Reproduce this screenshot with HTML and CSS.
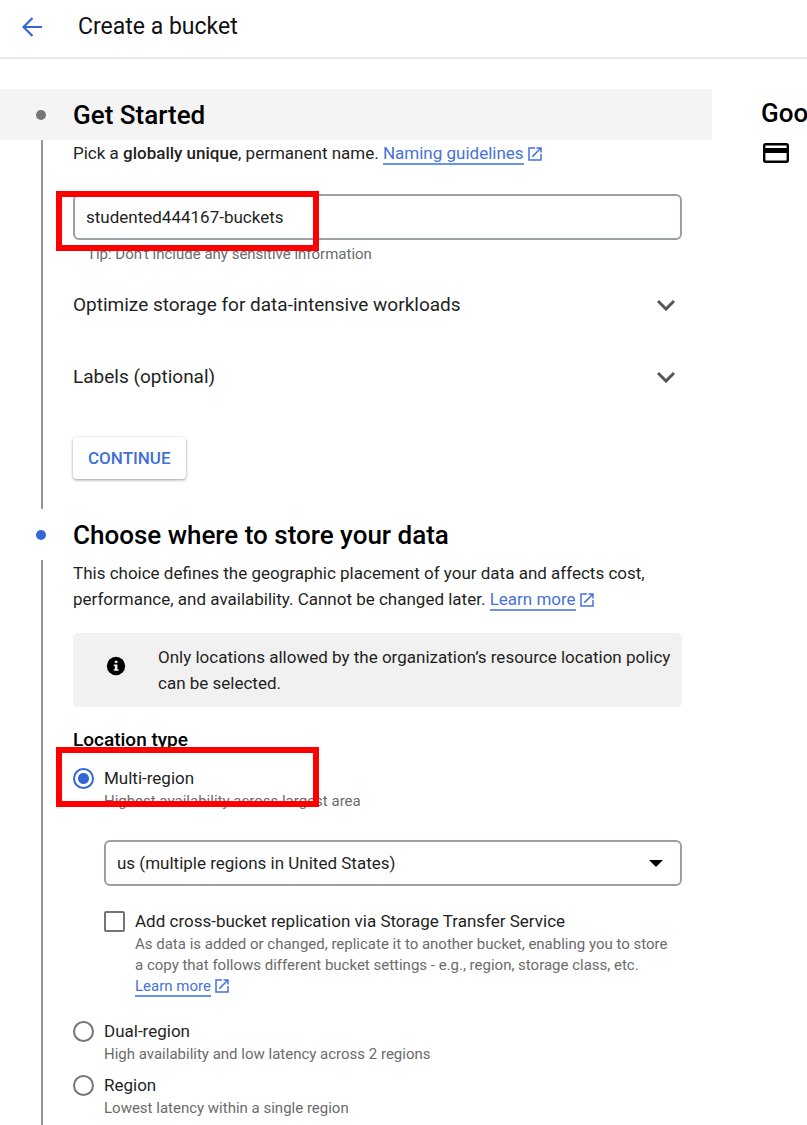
FILE: index.html
```html
<!DOCTYPE html>
<html lang="en">

<head>
    <meta charset="UTF-8">
    <meta name="viewport" content="width=device-width, initial-scale=1.0">
    <title>Create a bucket</title>
    <link rel="stylesheet" href="styles.css">
</head>

<body>

    <!-- shared icons -->
    <svg class="sprite" aria-hidden="true">
        <symbol id="icon-open" viewBox="0 0 24 24">
            <path d="M19 19H5V5h7V3H3v18h18v-9h-2zM14 3v2h3.600l-9.800 9.800 1.400 1.400L19 6.400V10h2V3z"/>
        </symbol>
        <symbol id="icon-chevron" viewBox="0 0 18 12">
            <path d="M1 2l8 8 8-8" fill="none" stroke="currentColor" stroke-width="3"/>
        </symbol>
    </svg>

    <header class="topbar">
        <a class="back" href="#" aria-label="Back">
            <svg width="20" height="20" viewBox="0 0 20 20" aria-hidden="true">
                <path d="M20 10H2M10.500 1L1.500 10l9 9" fill="none" stroke="currentColor" stroke-width="2.200"/>
            </svg>
        </a>
        <h1 class="page-title">Create a bucket</h1>
    </header>

    <div class="layout">

        <main class="stepper">

            <section class="step">
                <header class="step-header visited">
                    <span class="dot"></span>
                    <h2 class="heading">Get Started</h2>
                </header>
                <div class="step-body">
                    <p class="text"><label for="name">Pick a <strong>globally unique</strong>, permanent name.</label> <a class="link" href="#">Naming guidelines</a><svg class="open-icon" aria-hidden="true"><use href="#icon-open"/></svg></p>

                    <div class="name-field">
                        <input class="field" id="name" type="text" value="studented444167-buckets">
                        <span class="highlight"></span>
                    </div>
                    <p class="hint tip">Tip: Don't include any sensitive information</p>

                    <button class="expander" type="button">
                        Optimize storage for data-intensive workloads
                        <svg class="chevron" aria-hidden="true"><use href="#icon-chevron"/></svg>
                    </button>
                    <button class="expander" type="button">
                        Labels (optional)
                        <svg class="chevron" aria-hidden="true"><use href="#icon-chevron"/></svg>
                    </button>

                    <button class="continue" type="button">CONTINUE</button>
                </div>
            </section>

            <section class="step">
                <header class="step-header active">
                    <span class="dot"></span>
                    <h2 class="heading">Choose where to store your data</h2>
                </header>
                <div class="step-body">
                    <p class="text">This choice defines the geographic placement of your data and affects cost, performance, and availability. Cannot be changed later. <a class="link" href="#">Learn more</a><svg class="open-icon" aria-hidden="true"><use href="#icon-open"/></svg></p>

                    <div class="notice">
                        <svg class="info-icon" viewBox="0 0 20 20" aria-hidden="true">
                            <circle cx="10" cy="10" r="9.200"/>
                            <path d="M8.800 4.800h2.600v2.200H8.800zM7.800 8.400h3.600v4.800h1.200v1.500H7.800v-1.500h1V9.900h-1z" fill="#f1f1f1"/>
                        </svg>
                        <p class="text">Only locations allowed by the organization’s resource location policy can be selected.</p>
                    </div>

                    <fieldset class="location">
                        <legend class="legend">Location type</legend>

                        <div class="option first">
                            <input class="radio" type="radio" name="location" id="multi" checked>
                            <div>
                                <label class="option-label" for="multi">Multi-region</label>
                                <p class="hint">Highest availability across largest area</p>
                            </div>
                            <span class="highlight"></span>
                        </div>

                        <div class="nested">
                            <div class="select-wrap">
                                <select class="field" aria-label="Location">
                                    <option>us (multiple regions in United States)</option>
                                </select>
                                <svg class="caret" viewBox="0 0 14 7" aria-hidden="true"><path d="M0 0h14L7 7z"/></svg>
                            </div>
                            <div class="option replication">
                                <input class="checkbox" type="checkbox" id="replication">
                                <div>
                                    <label class="option-label" for="replication">Add cross-bucket replication via Storage Transfer Service</label>
                                    <p class="hint">As data is added or changed, replicate it to another bucket, enabling you to store a copy that follows different bucket settings - e.g., region, storage class, etc. <br><a class="link" href="#">Learn more</a><svg class="open-icon" aria-hidden="true"><use href="#icon-open"/></svg></p>
                                </div>
                            </div>
                        </div>

                        <div class="option">
                            <input class="radio" type="radio" name="location" id="dual">
                            <div>
                                <label class="option-label" for="dual">Dual-region</label>
                                <p class="hint">High availability and low latency across 2 regions</p>
                            </div>
                        </div>

                        <div class="option">
                            <input class="radio" type="radio" name="location" id="region">
                            <div>
                                <label class="option-label" for="region">Region</label>
                                <p class="hint">Lowest latency within a single region</p>
                            </div>
                        </div>
                    </fieldset>
                </div>
            </section>

        </main>

        <aside class="sidebar">
            <h2 class="heading">Goo</h2>
            <svg class="card-icon" viewBox="0 0 26 20" aria-hidden="true">
                <rect x="1.200" y="1.200" width="23.600" height="17.600" rx="1.500" fill="none" stroke="#000" stroke-width="2.400"/>
                <path d="M1 5h24v5H1z"/>
            </svg>
        </aside>

    </div>

</body>

</html>
```
FILE: styles.css
```css
* {
    margin: 0;
    padding: 0;
    box-sizing: border-box;
}

body {
    font-family: Roboto, "Liberation Sans", sans-serif;
    font-size: 17px;
    line-height: 26px;
    color: #1f1f1f;
    background-color: #fff;
}

button,
input,
select {
    font: inherit;
    color: inherit;
}

.sprite {
    display: none;
}

/* top bar */

.topbar {
    display: flex;
    align-items: center;
    gap: 36px;
    height: 59px;
    padding: 0 22px 4px;
    border-bottom: 2px solid #e8e8e8;
}

.back {
    display: flex;
    color: #3367d6;
}

.page-title {
    font-size: 23px;
    font-weight: 400;
    color: #111;
}

/* page columns */

.layout {
    display: grid;
    grid-template-columns: minmax(0, 1fr) 46px;
    gap: 49px;
    padding-top: 30px;
}

.heading {
    font-size: 26px;
    font-weight: 500;
    color: #000;
}

.sidebar {
    padding-top: 11px;
    overflow: hidden;
}

.card-icon {
    display: block;
    width: 26px;
    height: 20px;
    margin: 17px 0 0 2px;
}

/* stepper */

.step-header {
    display: flex;
    align-items: center;
    gap: 27px;
    height: 51px;
    padding-left: 36px;
}

.visited {
    background-color: #f4f4f4;
}

.dot {
    width: 10px;
    height: 10px;
    border-radius: 50%;
    background-color: #757575;
}

.active .dot {
    background-color: #3367d6;
}

.step-body {
    margin-left: 41px;
    padding: 0 30px;
    border-left: 2px solid #949494;
}

.step:first-child .step-body {
    padding-bottom: 30px;
}

.step:last-child .step-body {
    padding-bottom: 7px;
}

.link {
    color: #4672db;
    text-decoration: none;
    border-bottom: 2px solid #6c92ea;
}

.open-icon {
    width: 18px;
    height: 18px;
    margin-left: 2px;
    vertical-align: -4px;
    fill: #4672db;
}

.hint {
    padding-top: 1px;
    font-size: 15px;
    line-height: 21px;
    color: #6b6b6b;
}

.tip {
    padding: 4px 14px;
}

.text strong {
    font-weight: 500;
}

.name-field {
    position: relative;
    margin-top: 28px;
}

.field {
    display: block;
    width: 100%;
    height: 46px;
    padding: 0 11px;
    border: 2px solid #9aa0a6;
    border-radius: 6px;
    background-color: #fff;
    appearance: none;
}

.expander {
    display: flex;
    justify-content: space-between;
    align-items: center;
    width: 100%;
    height: 72px;
    padding-right: 7px;
    border: 0;
    background: none;
    font-size: 19px;
    text-align: left;
}

.chevron {
    width: 18px;
    height: 12px;
    color: #555;
}

.continue {
    display: block;
    height: 42px;
    margin-top: 24px;
    padding: 0 15px;
    border: 0;
    border-radius: 4px;
    background-color: #fff;
    box-shadow: 0 1px 3px rgba(0, 0, 0, 0.4);
    font-weight: 500;
    color: #3f6fd9;
}

/* location step */

.notice {
    display: flex;
    align-items: center;
    gap: 32px;
    margin-top: 21px;
    padding: 11px 8px 11px 33px;
    border-radius: 5px;
    background-color: #f1f1f1;
}

.info-icon {
    flex: none;
    width: 20px;
    height: 20px;
    margin-bottom: 8px;
}

.location {
    margin-top: 21px;
    border: 0;
}

.legend {
    font-size: 19px;
    font-weight: 500;
    line-height: 24px;
    color: #000;
}

.option {
    position: relative;
    display: flex;
    gap: 10px;
    margin-top: 8px;
}

.first {
    margin-top: 14px;
}

.option-label {
    display: block;
    line-height: 24px;
}

.radio,
.checkbox {
    flex: none;
    width: 21px;
    height: 21px;
    margin-top: 2px;
    border: 2px solid #757575;
    border-radius: 50%;
    background-color: #fff;
    appearance: none;
}

.checkbox {
    border-radius: 2px;
}

.radio:checked {
    border-color: #3367d6;
    background: radial-gradient(circle, #3367d6 5px, #fff 6px);
}

.nested {
    margin: 28px 0 22px 31px;
}

.select-wrap {
    position: relative;
}

.caret {
    position: absolute;
    top: 20px;
    right: 19px;
    width: 14px;
    height: 7px;
    pointer-events: none;
}

.replication {
    margin-top: 23px;
    padding-right: 8px;
}

/* red frames laid over the fields to fill in */

.highlight {
    position: absolute;
    top: -3px;
    left: -17px;
    width: 263px;
    height: 60px;
    border: 6px solid #f00;
    pointer-events: none;
}

.first .highlight {
    top: -19px;
}
```
